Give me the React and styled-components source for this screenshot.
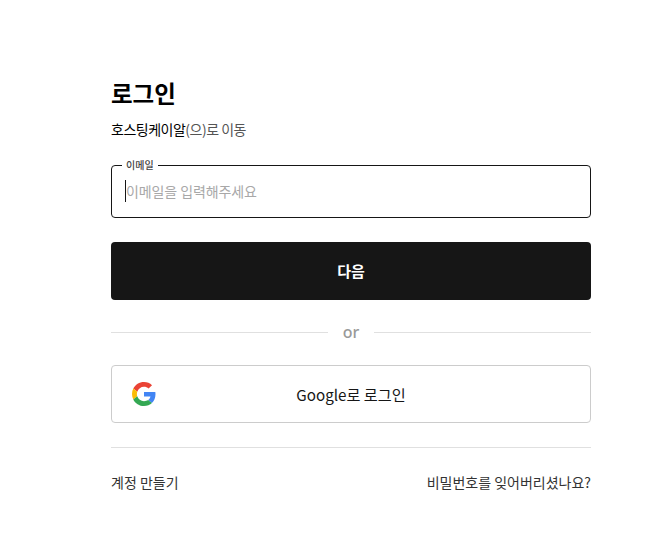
import React from "react";
import styled, { createGlobalStyle } from "styled-components";

const GlobalStyle = createGlobalStyle`
  html, body { margin: 0; padding: 0; background: #fff; }
  body { font-family: "Noto Sans CJK KR", "Noto Sans", sans-serif; }
  * { box-sizing: border-box; }
`;

const Page = styled.main`
  width: 668px;
  height: 551px;
  padding: 75px 77px 0 111px;
  overflow: hidden;
`;

const Title = styled.h1`
  margin: 0;
  font-size: 23.5px;
  line-height: 36px;
  font-weight: 700;
  color: #000;
`;

const Subtitle = styled.p`
  margin: 7px 0 0;
  font-size: 14px;
  line-height: 22px;
  color: #555;
  letter-spacing: -0.5px;
  strong { font-weight: 400; color: #000; }
`;

const Field = styled.fieldset`
  margin: 19px 0 0;
  padding: 0 13px;
  height: 59px;
  border: 1px solid #161616;
  border-radius: 4px;
  display: flex;
  align-items: center;
`;

const Legend = styled.legend`
  margin-left: -3px;
  padding: 0 4px;
  font-size: 10px;
  line-height: 12px;
  font-weight: 500;
  color: #444;
`;

const Input = styled.input`
  width: 100%;
  border: 0;
  outline: 0;
  padding: 0;
  margin-top: -6px;
  font: 400 14px/22px "Noto Sans CJK KR", "Noto Sans", sans-serif;
  letter-spacing: -0.1px;
  color: #161616;
  border-left: 1px solid #161616;
  &::placeholder { color: #a8a8a8; opacity: 1; }
`;

const PrimaryButton = styled.button`
  display: block;
  width: 100%;
  height: 58px;
  margin-top: 24px;
  border: 0;
  border-radius: 4px;
  background: #161616;
  color: #fff;
  font: 700 15px/22px "Noto Sans CJK KR", "Noto Sans", sans-serif;
`;

const OrRow = styled.div`
  display: flex;
  align-items: center;
  gap: 15px;
  height: 20px;
  margin-top: 22px;
  font: 500 16px/20px "Noto Sans", sans-serif;
  color: #999;
  &::before, &::after {
    content: "";
    flex: 1;
    height: 1px;
    background: #e0e0e0;
  }
`;

const GoogleButton = styled.button`
  position: relative;
  display: block;
  width: 100%;
  height: 58px;
  margin-top: 23px;
  background: #fff;
  border: 1px solid #ccc;
  border-radius: 4px;
  color: #161616;
  font: 400 15.2px/22px "Noto Sans CJK KR", "Noto Sans", sans-serif;
`;

const GoogleMark = styled.svg`
  position: absolute;
  left: 20px;
  top: 16px;
  width: 24px;
  height: 24px;
`;

const Rule = styled.hr`
  margin: 24px 0 0;
  border: 0;
  height: 1px;
  background: #e0e0e0;
`;

const Links = styled.nav`
  display: flex;
  justify-content: space-between;
  margin-top: 23px;
`;

const TextLink = styled.a`
  font-size: 14px;
  line-height: 22px;
  color: #333;
  text-decoration: none;
`;

export default function App() {
  return (
    <>
      <GlobalStyle />
      <Page>
        <Title>로그인</Title>
        <Subtitle><strong>호스팅케이알</strong>(으)로 이동</Subtitle>
        <Field>
          <Legend>이메일</Legend>
          <Input placeholder="이메일을 입력해주세요" />
        </Field>
        <PrimaryButton>다음</PrimaryButton>
        <OrRow>or</OrRow>
        <GoogleButton>
          <GoogleMark viewBox="0 0 48 48">
            <path fill="#EA4335" d="M24 9.5c3.54 0 6.71 1.22 9.21 3.6l6.85-6.85C35.9 2.38 30.47 0 24 0 14.62 0 6.51 5.38 2.56 13.22l7.98 6.19C12.43 13.72 17.74 9.5 24 9.5z" />
            <path fill="#4285F4" d="M46.98 24.55c0-1.57-.15-3.09-.38-4.55H24v9.02h12.94c-.58 2.96-2.26 5.48-4.78 7.18l7.73 6c4.51-4.18 7.09-10.36 7.09-17.65z" />
            <path fill="#FBBC05" d="M10.53 28.59c-.48-1.45-.76-2.99-.76-4.59s.27-3.14.76-4.59l-7.98-6.19C.92 16.46 0 20.12 0 24c0 3.88.92 7.54 2.56 10.78l7.97-6.19z" />
            <path fill="#34A853" d="M24 48c6.48 0 11.93-2.13 15.89-5.81l-7.73-6c-2.15 1.45-4.92 2.3-8.16 2.3-6.26 0-11.57-4.22-13.47-9.91l-7.98 6.19C6.51 42.62 14.62 48 24 48z" />
          </GoogleMark>
          Google로 로그인
        </GoogleButton>
        <Rule />
        <Links>
          <TextLink href="#">계정 만들기</TextLink>
          <TextLink href="#">비밀번호를 잊어버리셨나요?</TextLink>
        </Links>
      </Page>
    </>
  );
}
